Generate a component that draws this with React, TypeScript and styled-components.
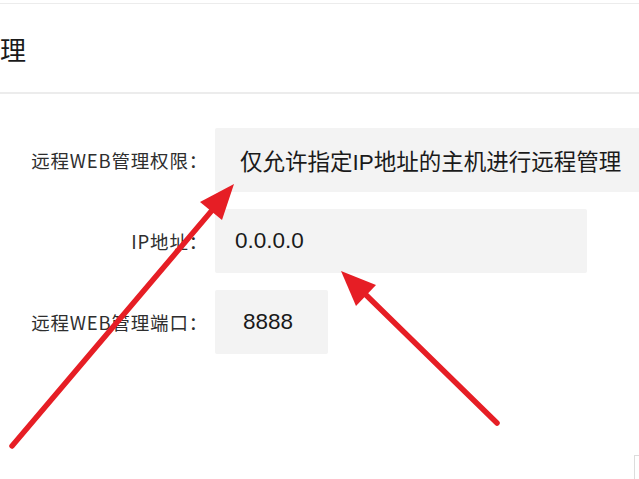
import React from 'react';
import styled, { createGlobalStyle } from 'styled-components';

const GlobalStyle = createGlobalStyle`
    html, body {
        margin: 0;
        padding: 0;
        background: #ffffff;
        overflow: hidden;
    }
    body {
        font-family: "Noto Sans CJK SC", "Noto Sans", sans-serif;
        color: #222;
    }
`

const Page = styled.div`
    position: relative;
    width: 639px;
    height: 479px;
    overflow: hidden;
    background: #fff;
`

const Header = styled.div`
    margin-top: 3px;
    height: 88px;
    border-top: 1px solid #ececec;
    border-bottom: 2px solid #ececec;
    display: flex;
    align-items: center;
`

const Title = styled.h2`
    margin: 0;
    font-size: 26px;
    font-weight: 400;
    color: #1a1a1a;
    white-space: nowrap;
`

const Form = styled.div`
    display: grid;
    grid-template-columns: 208px auto;
    column-gap: 7px;
    row-gap: 17px;
    padding-top: 34px;
`

const Label = styled.div`
    justify-self: end;
    align-self: center;
    font-size: 18.5px;
    letter-spacing: 0.8px;
    color: #2e2e2e;
    white-space: nowrap;
`

const Field = styled.div<{ $width: number; $pad: number }>`
    justify-self: start;
    box-sizing: border-box;
    width: ${p => p.$width}px;
    height: 64px;
    padding-left: ${p => p.$pad}px;
    display: flex;
    align-items: center;
    background: #f3f3f3;
    border-radius: 2px;
    font-family: "Liberation Sans", "Noto Sans CJK SC", sans-serif;
    font-size: 22.5px;
    color: #1a1a1a;
    white-space: nowrap;
`

const Overlay = styled.svg`
    position: absolute;
    left: 0;
    top: 0;
    width: 639px;
    height: 479px;
    pointer-events: none;
`

const CornerMark = styled.div`
    position: absolute;
    left: 634px;
    top: 455px;
    width: 10px;
    height: 30px;
    border-left: 1px solid #dcdcdc;
    border-top: 1px solid #dcdcdc;
`

const rows = [
    { label: '远程WEB管理权限：', value: '仅允许指定IP地址的主机进行远程管理', width: 440, pad: 25 },
    { label: 'IP地址：', value: '0.0.0.0', width: 372, pad: 20 },
    { label: '远程WEB管理端口：', value: '8888', width: 113, pad: 28 },
]

const RED = '#e61e25'

const App = () => {
    return (
        <Page>
            <GlobalStyle />
            <Header>
                <Title>理</Title>
            </Header>
            <Form>
                {rows.map(r => (
                    <React.Fragment key={r.label}>
                        <Label>{r.label}</Label>
                        <Field $width={r.width} $pad={r.pad}>{r.value}</Field>
                    </React.Fragment>
                ))}
            </Form>
            <Overlay viewBox="0 0 639 479">
                {/* arrow to permission field */}
                <line x1="12" y1="446" x2="214" y2="208" stroke={RED} strokeWidth="5.5" strokeLinecap="round" />
                <polygon points="234,184 222,220 200,202" fill={RED} />
                {/* arrow to ip field */}
                <line x1="497" y1="423" x2="363" y2="292" stroke={RED} strokeWidth="5.5" strokeLinecap="round" />
                <polygon points="341,271 376,285 356,306" fill={RED} />
            </Overlay>
            <CornerMark />
        </Page>
    )
}

export default App;
